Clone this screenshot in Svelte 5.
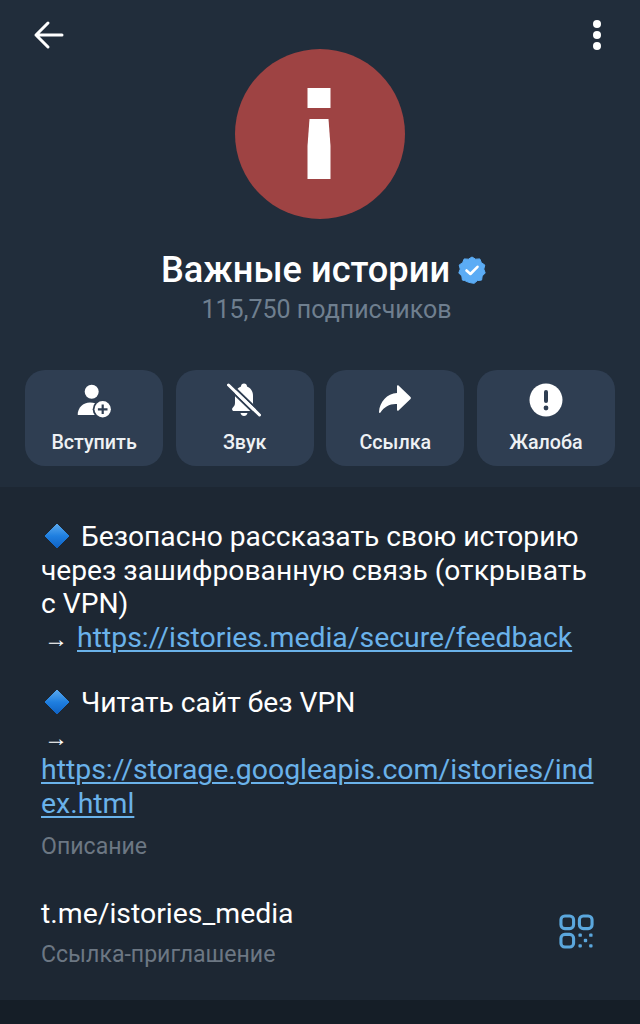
<script lang="ts">
  const actions = [
    { id: 'join', label: 'Вступить' },
    { id: 'mute', label: 'Звук' },
    { id: 'share', label: 'Ссылка' },
    { id: 'report', label: 'Жалоба' }
  ];
</script>

{#snippet diamond()}
  <svg class="diamond" viewBox="0 0 26 26" aria-hidden="true">
    <defs>
      <linearGradient id="dia" x1="0" y1="0" x2="0" y2="1">
        <stop offset="0" stop-color="#5aa9ee" />
        <stop offset="0.5" stop-color="#1f7fe0" />
        <stop offset="1" stop-color="#0f62c4" />
      </linearGradient>
    </defs>
    <path d="M13 1 L25 13 L13 25 L1 13 Z" fill="url(#dia)" stroke="url(#dia)" stroke-width="1" stroke-linejoin="round" />
  </svg>
{/snippet}

<div class="screen">
  <header class="profile">
    <div class="topbar">
      <button class="icon-btn" aria-label="Назад">
        <svg width="32" height="32" viewBox="0 0 32 32" fill="none" stroke="#fff" stroke-width="3" stroke-linecap="round" stroke-linejoin="round">
          <path d="M3 16 H29 M15 4 L3 16 L15 28" />
        </svg>
      </button>
      <button class="icon-btn" aria-label="Меню">
        <svg width="10" height="30" viewBox="0 0 10 30" fill="#fff">
          <circle cx="5" cy="4" r="4" /><circle cx="5" cy="15" r="4" /><circle cx="5" cy="26" r="4" />
        </svg>
      </button>
    </div>

    <div class="avatar">
      <svg class="avatar-mark" width="24" height="92" viewBox="0 0 24 92" fill="#fff">
        <rect x="0.5" y="0" width="23" height="20" />
        <path d="M2.5 31 H21.5 L23.5 58 V91 H0.5 V58 Z" />
      </svg>
    </div>

    <div class="name-row">
      <h1>Важные истории</h1>
      <svg class="verified" width="28" height="28" viewBox="0 0 28 28">
        <path fill="#5bacf5" d="M14 1 L17.6 3.2 L21.8 2.9 L23.4 6.7 L26.8 9 L25.8 13.1 L27.2 17 L24.2 20 L23.6 24.1 L19.4 24.6 L16.2 27.3 L14 27 L10.6 26.3 L6.8 24.6 L4.4 24.1 L3.8 20 L0.8 17 L2.2 13.1 L1.2 9 L4.6 6.7 L6.2 2.9 L10.4 3.2 Z" stroke="#5bacf5" stroke-width="1" stroke-linejoin="round" />
        <path d="M8.5 14.5 L12.4 18 L19.5 10.8" fill="none" stroke="#fff" stroke-width="2.6" stroke-linecap="round" stroke-linejoin="round" />
      </svg>
    </div>
    <p class="subs">115,750 подписчиков</p>

    <div class="actions">
      {#each actions as a (a.id)}
        <button class="action">
          <span class="action-icon">
            {#if a.id === 'join'}
              <svg width="36" height="36" viewBox="0 0 36 36">
                <circle cx="15.7" cy="9.7" r="7" fill="#fff" />
                <path fill="#fff" d="M1.7 32.5 C1.7 26 7 20.5 14 20.5 C18 20.5 21 21.5 23 23 L20 33 H3 C2.2 33 1.7 33 1.7 32.5 Z" />
                <circle cx="26.7" cy="27.3" r="10" fill="#2f3e52" />
                <circle cx="26.7" cy="27.3" r="8.2" fill="#fff" />
                <path d="M26.7 22.5 V32.1 M21.9 27.3 H31.5" stroke="#2f3e52" stroke-width="2.2" />
              </svg>
            {:else if a.id === 'mute'}
              <svg width="36" height="36" viewBox="0 0 36 36">
                <path fill="#fff" d="M17 1.5 C18.8 1.5 20 2.8 20 4.5 C24 6 26 9.5 26 14 V21 C26 23 27 24.5 28.5 26 C29.5 27.5 28.5 29 27 29 H7 C5.5 29 4.5 27.5 5.5 26 C7 24.5 8 23 8 21 V14 C8 9.5 10 6 14 4.5 C14 2.8 15.2 1.5 17 1.5 Z" />
                <path fill="#fff" d="M13.5 31 H20.5 C20 33 18.8 34 17 34 C15.2 34 14 33 13.5 31 Z" />
                <path d="M3.3 1.2 L34.3 31.2" stroke="#2f3e52" stroke-width="2" />
                <path d="M-0.3 4.8 L30.7 34.8" stroke="#2f3e52" stroke-width="2" />
                <path d="M1.5 3 L32.5 33" stroke="#fff" stroke-width="3" stroke-linecap="round" />
              </svg>
            {:else if a.id === 'share'}
              <svg width="36" height="36" viewBox="0 0 36 36">
                <path fill="#fff" transform="translate(0 -1)" d="M20 5 C20 4.5 21 4 21.5 4.5 L33.5 16 C34 16.5 34 17.5 33.5 18 L21.5 29.5 C21 30 20 29.5 20 29 V23 C13 22.5 7.5 25.5 3.5 31.5 C3 32.2 2 32 2 31 C2.5 21 10 12.5 20 12 Z" />
              </svg>
            {:else}
              <svg width="36" height="36" viewBox="0 0 36 36">
                <circle cx="18" cy="18" r="16.5" fill="#fff" />
                <rect x="16" y="8" width="4" height="13" rx="2" fill="#2f3e52" />
                <circle cx="18" cy="26" r="2.4" fill="#2f3e52" />
              </svg>
            {/if}
          </span>
          <span class="action-label">{a.label}</span>
        </button>
      {/each}
    </div>
  </header>

  <section class="info">
    <div class="about">
      <p>{@render diamond()} Безопасно рассказать свою историю<br />через зашифрованную связь (открывать<br />с VPN)<br /><span class="arrow">→</span> <a href="#feedback">https://istories.media/secure/feedback</a></p>
      <p>{@render diamond()} Читать сайт без VPN<br /><span class="arrow">→</span><br /><a href="#site">https://storage.googleapis.com/istories/ind<br />ex.html</a></p>
    </div>
    <div class="caption">Описание</div>

    <div class="invite">
      <div>
        <div class="invite-link">t.me/istories_media</div>
        <div class="caption">Ссылка-приглашение</div>
      </div>
      <svg class="qr" width="35" height="35" viewBox="0 0 36 36" fill="none" stroke="#5ba7dd" stroke-width="3.2">
        <rect x="2" y="2" width="13" height="13" rx="4" />
        <rect x="21" y="2" width="13" height="13" rx="4" />
        <rect x="2" y="21" width="13" height="13" rx="4" />
        <g fill="#5ba7dd" stroke="none">
          <rect x="20" y="20" width="3.5" height="3.5" rx="1" />
          <rect x="31" y="20" width="3.5" height="3.5" rx="1" />
          <rect x="25.5" y="25.5" width="3.5" height="3.5" rx="1" />
          <rect x="20" y="31" width="3.5" height="3.5" rx="1" />
          <rect x="31" y="31" width="3.5" height="3.5" rx="1" />
        </g>
      </svg>
    </div>
  </section>
  <div class="rest"></div>
</div>

<style>
  :global(body) {
    background: #151e27;
  }

  .screen {
    width: 640px;
    height: 1024px;
    display: flex;
    flex-direction: column;
    font-family: Roboto, "Liberation Sans", sans-serif;
    overflow: hidden;
  }

  .profile {
    background: #212d3b;
    height: 487px;
    padding: 19px 25px 0;
    box-sizing: border-box;
    display: flex;
    flex-direction: column;
    align-items: center;
  }

  .topbar {
    width: 100%;
    height: 32px;
    display: flex;
    justify-content: space-between;
    align-items: center;
    padding: 0 13px 0 8px;
    box-sizing: border-box;
  }

  .icon-btn {
    background: none;
    border: none;
    padding: 0;
    display: flex;
  }

  .avatar {
    width: 170px;
    height: 170px;
    margin-top: -2px;
    border-radius: 50%;
    background: #9e4343;
    display: flex;
    align-items: center;
    justify-content: center;
  }

  .avatar-mark {
    margin-right: 3px;
  }

  .name-row {
    margin-top: 31px;
    padding-left: 7px;
    display: flex;
    align-items: center;
    gap: 8px;
    height: 40px;
  }

  h1 {
    margin: 0;
    font-size: 36.2px;
    line-height: 40px;
    font-weight: 500;
    color: #fff;
  }

  .subs {
    margin: 2px 0 0;
    padding-left: 13px;
    font-size: 25px;
    line-height: 36px;
    color: #6f7f8f;
  }

  .actions {
    margin-top: 42px;
    width: 100%;
    display: grid;
    grid-template-columns: repeat(4, 1fr);
    gap: 12.5px;
  }

  .action {
    height: 96px;
    border: none;
    border-radius: 20px;
    background: #2f3e52;
    padding: 12px 0 0;
    display: flex;
    flex-direction: column;
    align-items: center;
    font-family: inherit;
  }

  .action-icon {
    height: 36px;
    display: flex;
  }

  .action-label {
    margin-top: 11px;
    font-size: 19.7px;
    line-height: 28px;
    font-weight: 500;
    color: #eef1f4;
  }

  .info {
    background: #1d2733;
    height: 513px;
    padding: 33px 41px 0;
    box-sizing: border-box;
    color: #fff;
  }

  .about p {
    margin: 0 0 32px;
    font-size: 28.2px;
    line-height: 33.5px;
    white-space: nowrap;
  }

  .about p:last-child {
    margin-bottom: 0;
  }

  .about a {
    font-size: 28.4px;
    color: #6ab2ea;
    text-decoration: underline;
    text-underline-offset: 3px;
    text-decoration-thickness: 2px;
  }

  .diamond {
    width: 26px;
    height: 26px;
    margin: 0 4px 0 3px;
    vertical-align: -3px;
  }

  .arrow {
    display: inline-block;
    margin: 0 2px 0 3px;
    font-size: 24px;
    line-height: 1;
  }

  .caption {
    margin-top: 12px;
    font-size: 23.1px;
    line-height: 30px;
    color: #6c7783;
  }

  .invite {
    margin-top: 35px;
    display: flex;
    justify-content: space-between;
    align-items: center;
    padding-right: 5px;
  }

  .invite-link {
    font-size: 28.4px;
    line-height: 34px;
  }

  .invite .caption {
    margin-top: 9px;
  }

  .qr {
    margin-bottom: 4px;
  }

  .rest {
    flex: 1;
    background: #151e27;
  }
</style>
